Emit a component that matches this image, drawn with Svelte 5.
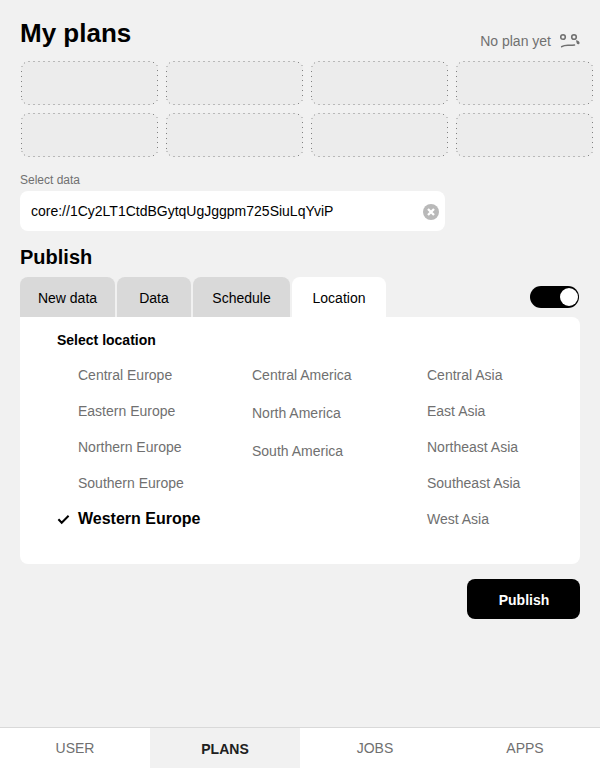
<script>
  const slots = Array.from({ length: 8 }, (_, i) => i);
  const regions = [
    { name: 'europe', items: ['Central Europe', 'Eastern Europe', 'Northern Europe', 'Southern Europe', 'Western Europe'] },
    { name: 'america', items: ['Central America', 'North America', 'South America'] },
    { name: 'asia', items: ['Central Asia', 'East Asia', 'Northeast Asia', 'Southeast Asia', 'West Asia'] }
  ];
  let selected = $state('Western Europe');
  let tab = $state('Location');
  let nav = $state('PLANS');
</script>

<div class="page">
  <header>
    <h1>My plans</h1>
    <div class="empty">
      <span>No plan yet</span>
      <svg width="20" height="16" viewBox="0 0 20 16" fill="none" stroke="#707070" stroke-width="1.6">
        <circle cx="3" cy="4" r="2.3" />
        <circle cx="14" cy="4" r="2.3" />
        <path d="M1.700 13.700C4.500 11.800 7 12.200 9.500 12.200S13 12.200 14.500 12" stroke-linecap="round" />
        <path d="M16 7.300C17.500 7.300 19.800 8.700 19.600 10C19.400 11.600 17.300 11.600 16.700 10.300Z" fill="#707070" stroke="none" />
      </svg>
    </div>
  </header>

  <div class="slots">
    {#each slots as slot (slot)}
      <svg width="137" height="44" viewBox="0 0 137 44">
        <rect width="137" height="44" rx="8" fill="#ececec" />
        <path d="M7 .5H132M7 43.5H132" stroke="#b9b9b9" stroke-dasharray="2 3" />
        <path d="M.5 10V36M136.5 9V37" stroke="#808080" stroke-dasharray="1 4" />
        <path d="M3.500 1v2M0 5.500h2M3.500 41v2M0 38.500h2M135 4.500h2M135 39.500h2" stroke="#c4c4c4" />
        <path d="M132 1.500h1M132 42.500h1" stroke="#888" />
      </svg>
    {/each}
  </div>

  <label for="data">Select data</label>
  <div class="field">
    <input id="data" value="core://1Cy2LT1CtdBGytqUgJggpm725SiuLqYviP" />
    <svg width="16" height="16" viewBox="0 0 16 16">
      <circle cx="8" cy="8" r="8" fill="#b9b9b9" />
      <path d="M5 5L11 11M11 5L5 11" stroke="#fff" stroke-width="2.300" />
    </svg>
  </div>

  <h2>Publish</h2>
  <div class="bar">
    <div class="tabs">
      {#each ['New data', 'Data', 'Schedule', 'Location'] as name (name)}
        <button class="tab {name.replace(' ', '').toLowerCase()}" class:active={tab === name} onclick={() => (tab = name)}>{name}</button>
      {/each}
    </div>
    <button class="toggle" aria-label="Publish enabled"><i></i></button>
  </div>

  <section>
    <h3>Select location</h3>
    <div class="columns">
      {#each regions as region (region.name)}
        <div class="column {region.name}">
          {#each region.items as item (item)}
            <button class="item" class:selected={selected === item} onclick={() => (selected = item)}>
              <span class="mark">
                {#if selected === item}
                  <svg width="13" height="12" viewBox="0 0 13 12" fill="none" stroke="#000" stroke-width="2">
                    <path d="M1.400 5.200L4.700 8.700L11.600 1.700" />
                  </svg>
                {/if}
              </span>{item}
            </button>
          {/each}
        </div>
      {/each}
    </div>
  </section>

  <button class="publish">Publish</button>

  <nav>
    {#each ['USER', 'PLANS', 'JOBS', 'APPS'] as name (name)}
      <button class:current={nav === name} onclick={() => (nav = name)}>{name}</button>
    {/each}
  </nav>
</div>

<style>
  :global(body) { margin: 0; background: #f1f1f1; }
  .page {
    box-sizing: border-box;
    display: flex;
    flex-direction: column;
    width: 600px;
    height: 768px;
    overflow: hidden;
    background: #f1f1f1;
    color: #000;
    font: 14px/16px "Liberation Sans", Arial, sans-serif;
  }
  button, input { border: 0; padding: 0; margin: 0; background: none; font: inherit; color: inherit; }
  h1, h2, h3 { margin: 0; font-weight: bold; }
  svg { display: block; flex: none; }
  header { display: flex; justify-content: space-between; height: 61px; padding: 0 20px; box-sizing: border-box; }
  h1 { margin-top: 18px; font-size: 26px; line-height: 30px; }
  .empty { display: flex; gap: 9px; margin-top: 33px; color: #707070; }
  .slots { display: grid; grid-template-columns: repeat(4, 137px); gap: 8px; margin-left: 21px; }
  label { margin: 16px 0 0 20px; font-size: 12px; line-height: 14px; color: #707070; }
  .field { display: flex; align-items: center; width: 425px; height: 40px; margin: 4px 0 0 20px; padding: 0 6px 0 11px; box-sizing: border-box; border-radius: 8px; background: #fff; }
  .field input { flex: 1; height: 40px; outline: 0; }
  .field svg { margin-top: 2px; }
  h2 { margin: 15px 0 0 20px; font-size: 20px; line-height: 23px; }
  .bar { display: flex; justify-content: space-between; height: 40px; margin: 8px 21px 0 20px; }
  .tabs { display: flex; gap: 2px; }
  .tab { height: 40px; padding-top: 2px; border-radius: 8px 8px 0 0; background: #d9d9d9; }
  .newdata { width: 95px; }
  .data { width: 74px; }
  .schedule { width: 97px; }
  .location { width: 94px; }
  .active { background: #fff; }
  .toggle { display: flex; justify-content: flex-end; width: 49px; height: 22px; margin-top: 9px; padding: 2px 1.5px; box-sizing: border-box; border-radius: 11px; background: #000; }
  .toggle i { width: 18px; height: 18px; border-radius: 50%; background: #fff; }
  section { width: 560px; height: 247px; margin-left: 20px; padding: 15px 0 0 37px; box-sizing: border-box; border-radius: 0 8px 8px 8px; background: #fff; }
  h3 { font-size: 14px; line-height: 16px; }
  .columns { display: flex; margin-top: 19px; }
  .column { display: flex; flex-direction: column; gap: 20px; width: 174px; }
  .america { width: 175px; gap: 22px; }
  .item { display: flex; align-items: center; height: 16px; color: #707070; white-space: nowrap; }
  .mark { flex: none; width: 21px; }
  .selected { color: #000; font-size: 16px; font-weight: bold; }
  .selected .mark svg { margin-top: 2px; }
  .publish { align-self: flex-end; width: 113px; height: 40px; margin: 15px 20px 0 0; padding: 2px 0 0 1px; border-radius: 8px; background: #000; color: #fff; font-weight: bold; }
  nav { display: flex; height: 41px; margin-top: auto; box-sizing: border-box; border-top: 1px solid #d9d9d9; background: #fff; }
  nav button { flex: 1; color: #707070; }
  nav .current { padding-top: 2px; background: #f1f1f1; color: #202020; font-weight: bold; }
</style>
